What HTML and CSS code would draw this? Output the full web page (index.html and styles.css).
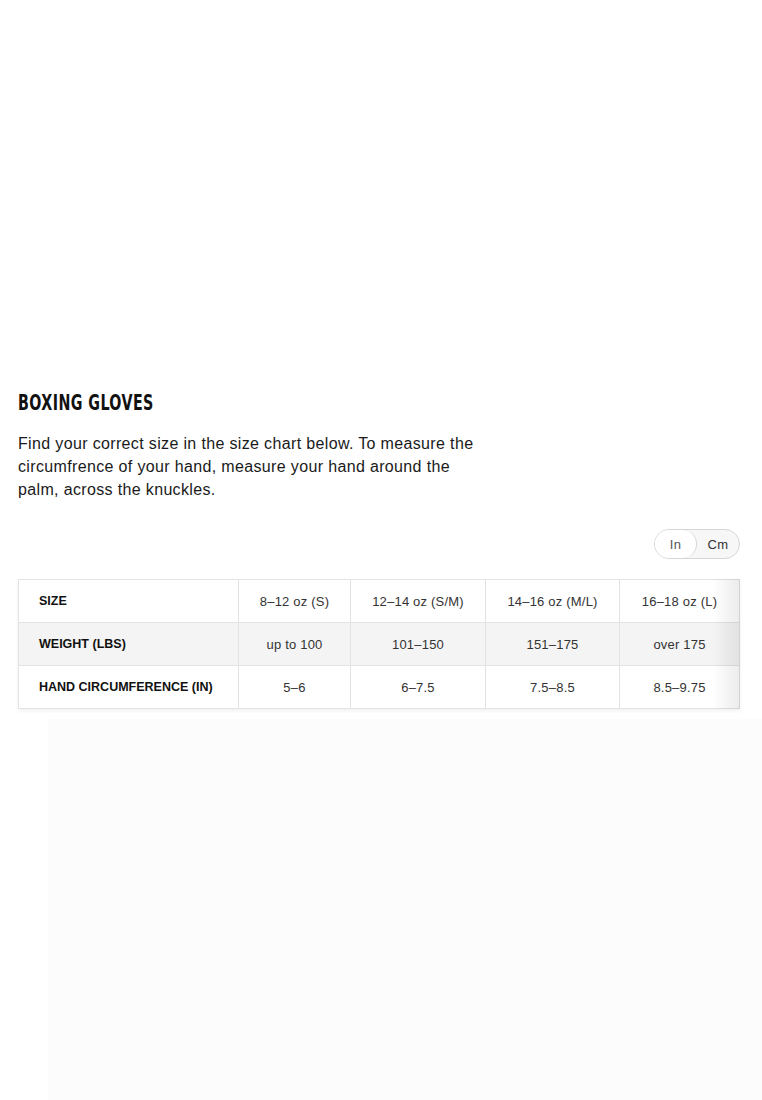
FILE: index.html
```html
<!DOCTYPE html>
<html lang="en">
<head>
<meta charset="utf-8">
<title>Boxing Gloves Size Chart</title>
<link rel="stylesheet" href="styles.css">
</head>
<body>
<main class="page">
  <section class="chart">
    <h2 class="chart-title"><span class="chart-title-text">BOXING GLOVES</span></h2>
    <p class="chart-intro">Find your correct size in the size chart below. To measure the circumfrence of your hand, measure your hand around the palm, across the knuckles.</p>
    <div class="toggle-row">
      <div class="toggle">
        <span class="seg seg-active">In</span>
        <span class="seg">Cm</span>
      </div>
    </div>
    <div class="table-wrap">
      <table class="size-table">
        <tr>
          <th>SIZE</th>
          <td>8–12 oz (S)</td>
          <td>12–14 oz (S/M)</td>
          <td>14–16 oz (M/L)</td>
          <td>16–18 oz (L)</td>
        </tr>
        <tr class="alt">
          <th>WEIGHT (LBS)</th>
          <td>up to 100</td>
          <td>101–150</td>
          <td>151–175</td>
          <td>over 175</td>
        </tr>
        <tr>
          <th>HAND CIRCUMFERENCE (IN)</th>
          <td>5–6</td>
          <td>6–7.5</td>
          <td>7.5–8.5</td>
          <td>8.5–9.75</td>
        </tr>
      </table>
    </div>
  </section>
  <div class="below"></div>
</main>
</body>
</html>
```

FILE: styles.css
```css
html, body {
  margin: 0;
  padding: 0;
  background: #ffffff;
}
.page {
  min-height: 1100px;
  display: flex;
  flex-direction: column;
  font-family: "Liberation Sans", Arial, sans-serif;
  color: #111111;
}
.chart {
  padding: 388px 22px 0 18px;
}
.chart-title {
  margin: 0;
  font-family: "DejaVu Sans Condensed", "Liberation Sans", sans-serif;
  font-weight: 700;
  font-size: 22px;
  line-height: 30px;
  letter-spacing: 0.6px;
  color: #111111;
}
.chart-title-text {
  display: inline-block;
  transform: scaleX(0.72);
  transform-origin: left center;
}
.chart-intro {
  margin: 14px 0 0 0;
  max-width: 462px;
  font-size: 16px;
  line-height: 23px;
  letter-spacing: 0.35px;
  color: #1a1a1a;
}
.toggle-row {
  display: flex;
  justify-content: flex-end;
  margin-top: 28px;
}
.toggle {
  display: flex;
  align-items: stretch;
  height: 28px;
  border: 1px solid #d6d6d6;
  border-radius: 15px;
  background: #f7f7f7;
  overflow: hidden;
}
.seg {
  display: flex;
  align-items: center;
  justify-content: center;
  font-size: 13px;
  letter-spacing: 0.3px;
  color: #333333;
}
.seg-active {
  width: 41px;
  background: #ffffff;
  border-right: 1px solid #d6d6d6;
  border-radius: 0 15px 15px 0;
  color: #555555;
}
.seg:not(.seg-active) {
  width: 42px;
}
.table-wrap {
  position: relative;
  margin-top: 20px;
  box-shadow: 0 2px 4px rgba(0, 0, 0, 0.06);
}
.table-wrap::after {
  content: "";
  position: absolute;
  top: 0;
  right: 0;
  bottom: 0;
  width: 28px;
  background: linear-gradient(to right, rgba(0, 0, 0, 0), rgba(0, 0, 0, 0.08));
  pointer-events: none;
}
.size-table {
  width: 100%;
  border-collapse: collapse;
  table-layout: fixed;
}
.size-table th,
.size-table td {
  height: 42px;
  padding: 0;
  border: 1px solid #e3e3e3;
  font-size: 13px;
  letter-spacing: 0.2px;
  color: #333333;
}
.size-table th {
  width: 199px;
  padding-left: 20px;
  text-align: left;
  font-size: 12.5px;
  font-weight: 700;
  letter-spacing: 0;
  color: #111111;
}
.size-table td {
  text-align: center;
}
.size-table tr > :nth-child(2) { width: 111px; }
.size-table tr > :nth-child(3) { width: 134px; }
.size-table tr > :nth-child(4) { width: 133px; }
.size-table .alt th,
.size-table .alt td {
  background: #f4f4f4;
}
.below {
  flex: 1;
  margin: 10px 0 0 48px;
  background: #fcfcfc;
}
```
